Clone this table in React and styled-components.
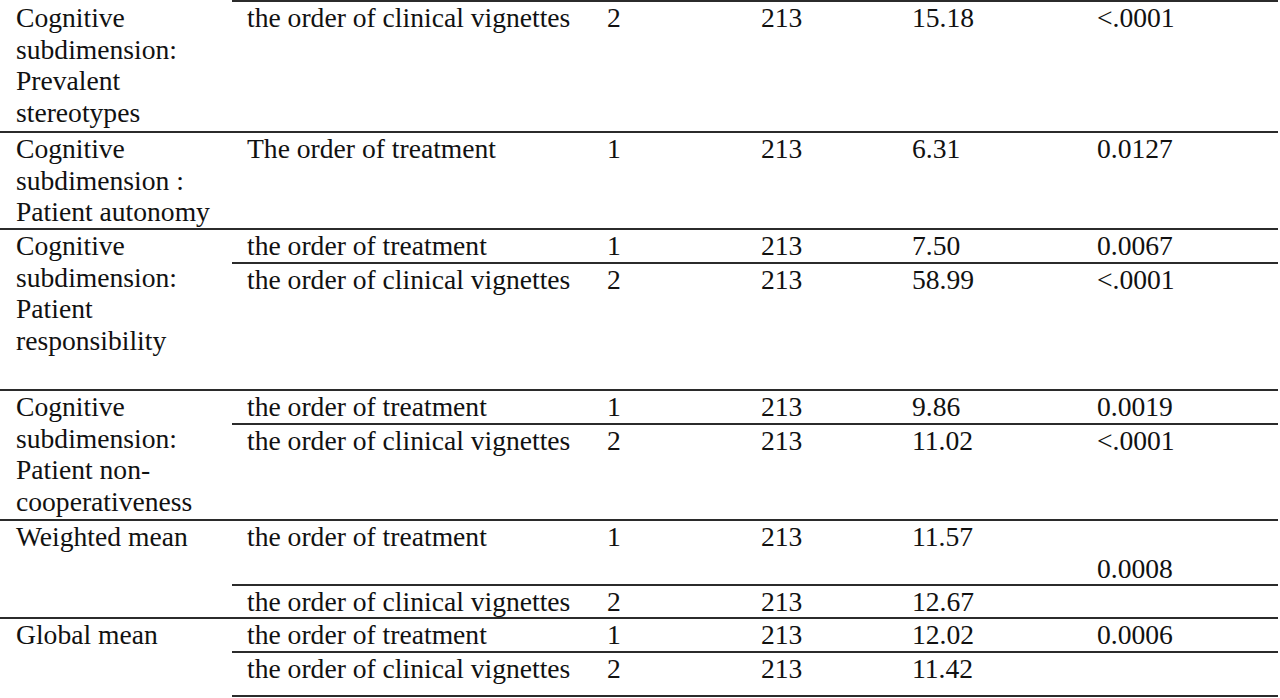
import React from "react";
import styled, { createGlobalStyle } from "styled-components";

const Global = createGlobalStyle`
  html, body { margin: 0; padding: 0; background: #fff; }
  body { font-family: "Liberation Serif", "Times New Roman", "DejaVu Serif", serif; color: #111; }
`;

const RULE = "2px solid #2b2b2b";

const Table = styled.div`
  width: 1278px;
  display: flex;
  flex-direction: column;
  font-family: "Liberation Serif", "Times New Roman", "DejaVu Serif", serif;
  font-size: 27.6px;
  line-height: 31.6px;
  color: #111;
`;

const Group = styled.div`
  display: grid;
  grid-template-columns: 232px 1fr;
`;

const Label = styled.div`
  padding-left: 16px;
  padding-right: 4px;
  border-top: ${(p) => (p.$ruled ? RULE : "2px solid transparent")};
`;

const SubRows = styled.div`
  display: flex;
  flex-direction: column;
  border-top: ${RULE};
  border-bottom: ${(p) => (p.$last ? RULE : "none")};
`;

const SubRow = styled.div`
  display: grid;
  grid-template-columns: 360px 154px 151px 185px 1fr;
  height: ${(p) => p.$h}px;
  border-top: ${(p) => (p.$first ? "none" : RULE)};
  box-sizing: content-box;
`;

const Cell = styled.div`
  padding-left: 15px;
  white-space: nowrap;
`;

const PCell = styled(Cell)`
  white-space: pre;
`;

const data = [
  {
    label: "Cognitive subdimension: Prevalent stereotypes",
    rows: [{ h: 129, c: ["the order of clinical vignettes", "2", "213", "15.18", "<.0001"] }],
  },
  {
    label: "Cognitive subdimension : Patient autonomy",
    rows: [{ h: 95, c: ["The order of treatment", "1", "213", "6.31", "0.0127"] }],
  },
  {
    label: "Cognitive subdimension: Patient responsibility",
    rows: [
      { h: 32, c: ["the order of treatment", "1", "213", "7.50", "0.0067"] },
      { h: 125, c: ["the order of clinical vignettes", "2", "213", "58.99", "<.0001"] },
    ],
  },
  {
    label: "Cognitive subdimension: Patient non-cooperativeness",
    rows: [
      { h: 32, c: ["the order of treatment", "1", "213", "9.86", "0.0019"] },
      { h: 94, c: ["the order of clinical vignettes", "2", "213", "11.02", "<.0001"] },
    ],
  },
  {
    label: "Weighted mean",
    rows: [
      { h: 63, c: ["the order of treatment", "1", "213", "11.57", "\n0.0008"] },
      { h: 31, c: ["the order of clinical vignettes", "2", "213", "12.67", ""] },
    ],
  },
  {
    label: "Global mean",
    rows: [
      { h: 32, c: ["the order of treatment", "1", "213", "12.02", "0.0006"] },
      { h: 42, c: ["the order of clinical vignettes", "2", "213", "11.42", ""] },
    ],
  },
];

export default function App() {
  return (
    <>
      <Global />
      <Table>
        {data.map((g, gi) => (
          <Group key={gi}>
            <Label $ruled={gi > 0}>{g.label}</Label>
            <SubRows $last={gi === data.length - 1}>
              {g.rows.map((r, ri) => (
                <SubRow key={ri} $h={r.h} $first={ri === 0}>
                  <Cell>{r.c[0]}</Cell>
                  <Cell>{r.c[1]}</Cell>
                  <Cell>{r.c[2]}</Cell>
                  <Cell>{r.c[3]}</Cell>
                  <PCell>{r.c[4]}</PCell>
                </SubRow>
              ))}
            </SubRows>
          </Group>
        ))}
      </Table>
    </>
  );
}
